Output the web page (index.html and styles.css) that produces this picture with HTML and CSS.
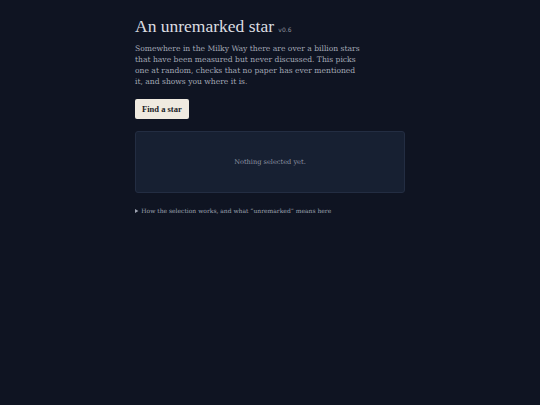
FILE: index.html
```html
<!DOCTYPE html>
<html>
<head>
<meta charset="utf-8">
<link rel="stylesheet" href="styles.css">
</head>
<body>
<main class="page">
  <h1 class="title">An unremarked star <span class="version">v0.6</span></h1>
  <p class="lede">Somewhere in the Milky Way there are over a billion stars that have been measured but never discussed. This picks one at random, checks that no paper has ever mentioned it, and shows you where it is.</p>
  <button class="find">Find a star</button>
  <section class="result">Nothing selected yet.</section>
  <details class="about">
    <summary>How the selection works, and what “unremarked” means here</summary>
  </details>
</main>
</body>
</html>
```
FILE: styles.css
```css
html, body {
  margin: 0;
  padding: 0;
  background: #0f1422;
  height: 100%;
}
body {
  font-family: "DejaVu Serif", "Liberation Serif", serif;
  color: #c9cbd2;
}
.page {
  width: 270px;
  margin: 0 auto;
  padding-top: 15px;
}
.title {
  margin: 0;
  font-family: "Liberation Serif", serif;
  font-weight: 400;
  font-size: 17.5px;
  line-height: 22px;
  color: #dcdde1;
}
.version {
  font-family: "DejaVu Sans", sans-serif;
  font-size: 6px;
  color: #8e929c;
}
.lede {
  max-width: 228px;
  margin: 2px 0 0;
  font-size: 7.6px;
  line-height: 11px;
  color: #a4a9b6;
}
.find {
  display: block;
  margin-top: 12px;
  height: 20px;
  padding: 0 7px;
  border: 0;
  border-radius: 2px;
  background: #efeae0;
  color: #1a1d26;
  font-family: "Liberation Serif", serif;
  font-size: 8.5px;
  font-weight: 700;
}
.result {
  margin-top: 12px;
  height: 60px;
  display: flex;
  align-items: center;
  justify-content: center;
  background: #172032;
  border: 1px solid #232d42;
  border-radius: 3px;
  font-size: 6.6px;
  color: #8f95a4;
}
.about {
  margin-top: 14px;
  font-size: 6px;
  color: #9ea3b1;
}
.about summary {
  cursor: pointer;
}
```
